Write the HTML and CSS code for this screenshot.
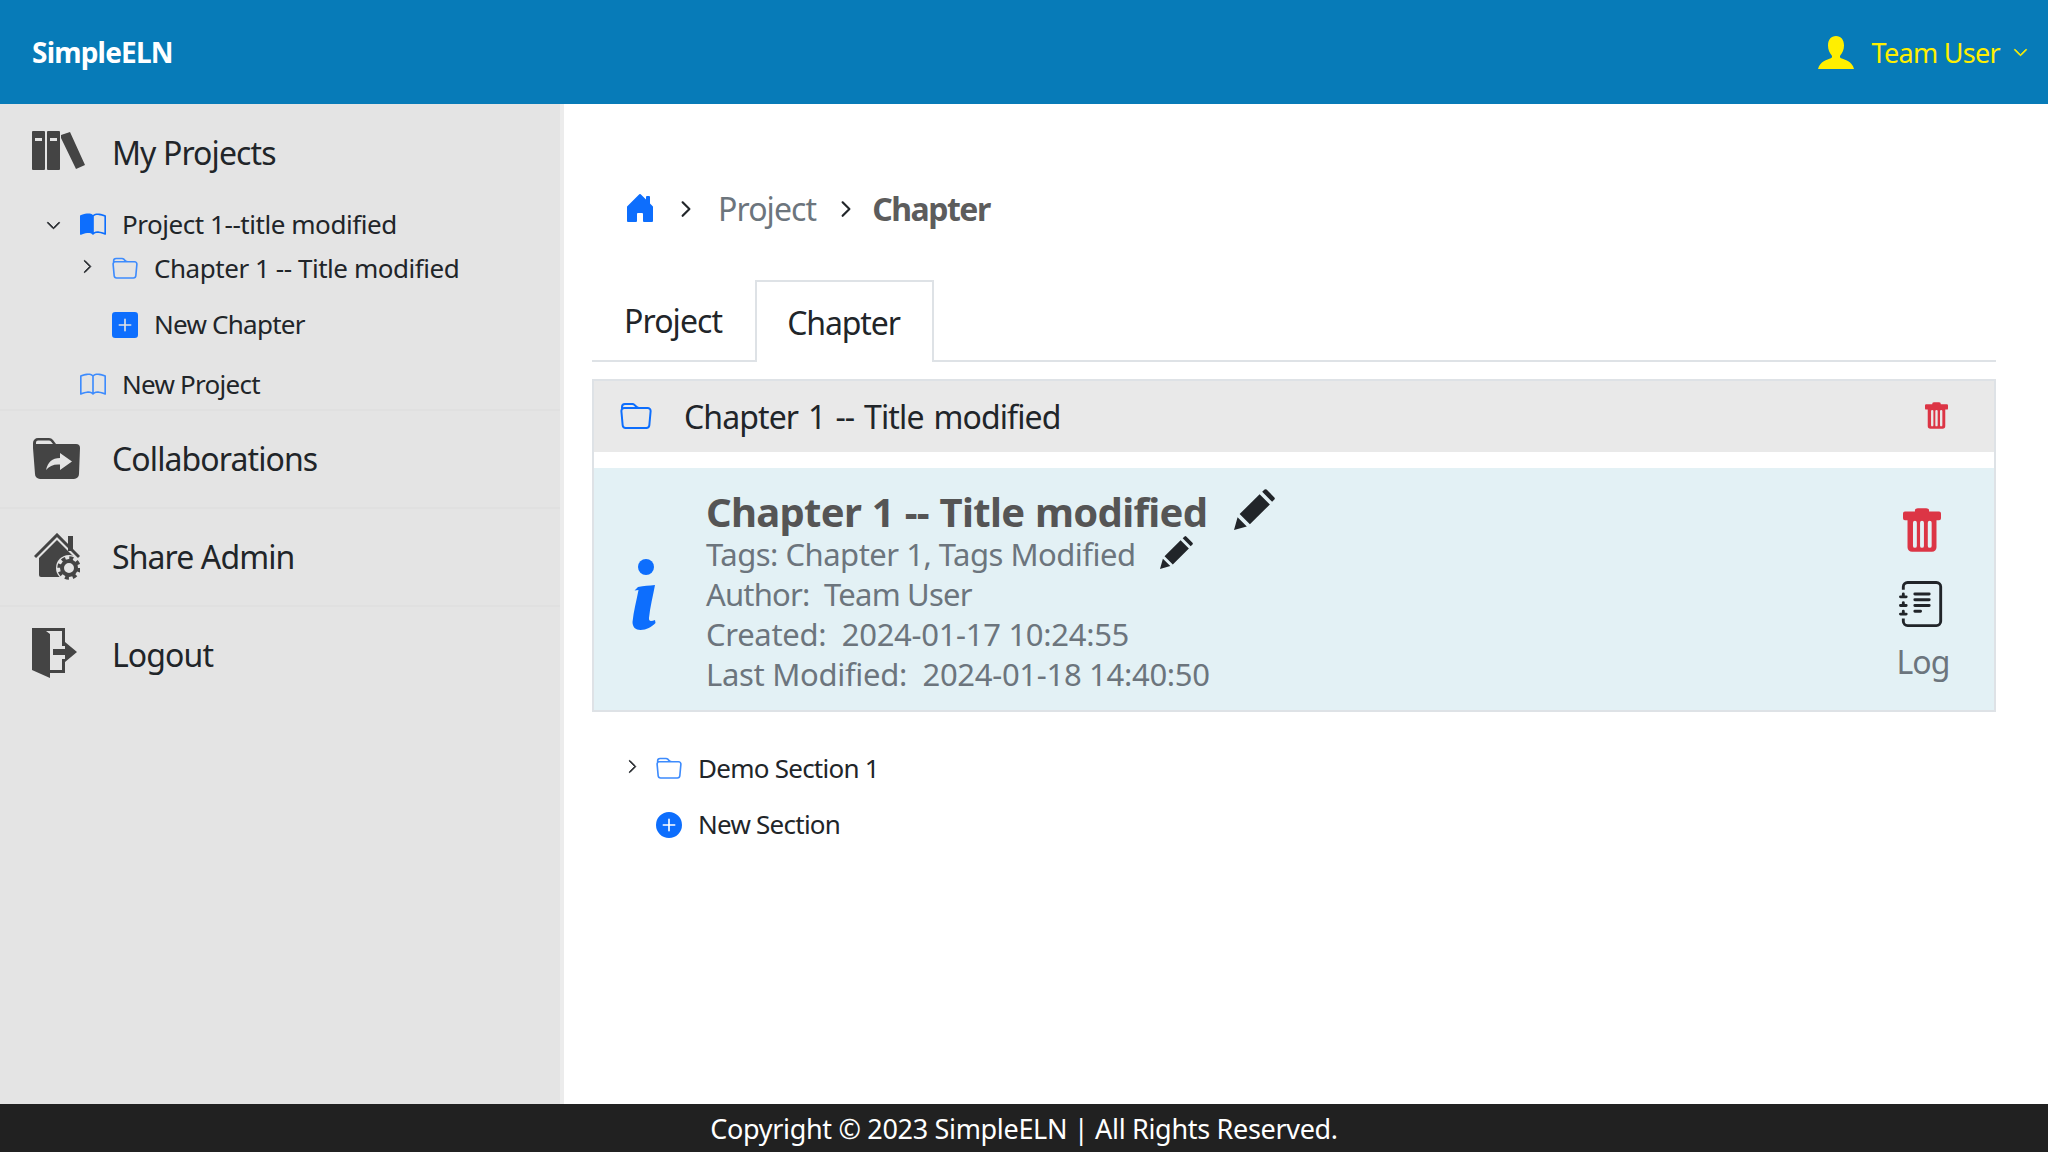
FILE: index.html
```html
<!DOCTYPE html>
<html lang="en">
<head>
<meta charset="utf-8">
<title>SimpleELN</title>
<link rel="stylesheet" href="styles.css">
</head>
<body>
<svg class="sprite" aria-hidden="true">
  <defs>
    <symbol id="chev-r" viewBox="0 0 16 16"><path fill="currentColor" stroke="currentColor" stroke-width=".9" d="M4.646 1.646a.5.5 0 0 1 .708 0l6 6a.5.5 0 0 1 0 .708l-6 6a.5.5 0 0 1-.708-.708L10.293 8 4.646 2.354a.5.5 0 0 1 0-.708z"/></symbol>
    <symbol id="chev-d" viewBox="0 0 16 16"><path fill="currentColor" stroke="currentColor" stroke-width=".9" d="M1.646 4.646a.5.5 0 0 1 .708 0L8 10.293l5.646-5.647a.5.5 0 0 1 .708.708l-6 6a.5.5 0 0 1-.708 0l-6-6a.5.5 0 0 1 0-.708z"/></symbol>
    <symbol id="book" viewBox="0 0 16 16"><path fill="currentColor" d="M1 2.828c.885-.37 2.154-.769 3.388-.893 1.33-.134 2.458.063 3.112.752v9.746c-.935-.53-2.12-.603-3.213-.493-1.18.12-2.37.461-3.287.811V2.828zm7.5-.141c.654-.689 1.782-.886 3.112-.752 1.234.124 2.503.523 3.388.893v9.923c-.918-.35-2.107-.692-3.287-.81-1.094-.111-2.278-.039-3.213.492V2.687zM8 1.783C7.015.936 5.587.81 4.287.94c-1.514.153-3.042.672-3.994 1.105A.5.5 0 0 0 0 2.5v11a.5.5 0 0 0 .707.455c.882-.4 2.303-.881 3.68-1.02 1.409-.142 2.59.087 3.223.877a.5.5 0 0 0 .78 0c.633-.79 1.814-1.019 3.222-.877 1.378.139 2.8.62 3.681 1.02A.5.5 0 0 0 16 13.5v-11a.5.5 0 0 0-.293-.455c-.952-.433-2.48-.952-3.994-1.105C10.413.809 8.985.936 8 1.783z"/></symbol>
    <symbol id="book-half" viewBox="0 0 16 16"><path fill="currentColor" d="M8.5 2.687c.654-.689 1.782-.886 3.112-.752 1.234.124 2.503.523 3.388.893v9.923c-.918-.35-2.107-.692-3.287-.81-1.094-.111-2.278-.039-3.213.492V2.687zM8 1.783C7.015.936 5.587.81 4.287.94c-1.514.153-3.042.672-3.994 1.105A.5.5 0 0 0 0 2.5v11a.5.5 0 0 0 .707.455c.882-.4 2.303-.881 3.68-1.02 1.409-.142 2.59.087 3.223.877a.5.5 0 0 0 .78 0c.633-.79 1.814-1.019 3.222-.877 1.378.139 2.8.62 3.681 1.02A.5.5 0 0 0 16 13.5v-11a.5.5 0 0 0-.293-.455c-.952-.433-2.48-.952-3.994-1.105C10.413.809 8.985.936 8 1.783z"/></symbol>
    <symbol id="folder" viewBox="0 0 16 16"><path fill="currentColor" d="M.54 3.87.5 3a2 2 0 0 1 2-2h3.672a2 2 0 0 1 1.414.586l.828.828A2 2 0 0 0 9.828 3h3.982a2 2 0 0 1 1.992 2.181l-.637 7A2 2 0 0 1 13.174 14H2.826a2 2 0 0 1-1.991-1.819l-.637-7a1.99 1.99 0 0 1 .342-1.31zM2.19 4a1 1 0 0 0-.996 1.09l.637 7a1 1 0 0 0 .995.91h10.348a1 1 0 0 0 .995-.91l.637-7A1 1 0 0 0 13.81 4H2.19zm4.69-1.707A1 1 0 0 0 6.172 2H2.5a1 1 0 0 0-1 .981l.006.139C1.72 3.042 1.95 3 2.19 3h5.396l-.707-.707z"/></symbol>
    <symbol id="home" viewBox="0 0 16 16"><path fill="currentColor" d="M6.5 14.5v-3.505c0-.245.25-.495.5-.495h2c.25 0 .5.25.5.5v3.5a.5.5 0 0 0 .5.5h4a.5.5 0 0 0 .5-.5v-7a.5.5 0 0 0-.146-.354L13 5.793V2.5a.5.5 0 0 0-.5-.5h-1a.5.5 0 0 0-.5.5v1.293L8.354 1.146a.5.5 0 0 0-.708 0l-6 6A.5.5 0 0 0 1.5 7.5v7a.5.5 0 0 0 .5.5h4a.5.5 0 0 0 .5-.5z"/></symbol>
    <symbol id="trash" viewBox="0 0 118 135"><path fill="currentColor" fill-rule="evenodd" d="M46 0h26a9 9 0 0 1 9 10h31a6 6 0 0 1 6 6v15a6 6 0 0 1-6 6h-8v84a14 14 0 0 1-14 14H28a14 14 0 0 1-14-14V37H6a6 6 0 0 1-6-6V16a6 6 0 0 1 6-6h31a9 9 0 0 1 9-10zM31 45v72a6 6 0 0 0 12 0V45a6 6 0 0 0-12 0zm22 0v72a6 6 0 0 0 12 0V45a6 6 0 0 0-12 0zm24 0v72a6 6 0 0 0 12 0V45a6 6 0 0 0-12 0z"/></symbol>
    <symbol id="pencil" viewBox="0 0 40 40"><path fill="currentColor" d="M0 40l3.5-12.5 9 9zM5.500 24.500 25 5l10 10-19.500 19.500zM27.500 2.800 29.800.6q1-.9 2 0l7.600 7.600q.9 1 0 2l-2.200 2.300z"/></symbol>
    <symbol id="journal" viewBox="0 0 16 16"><path fill="currentColor" d="M5 10.500a.5.5 0 0 1 .5-.5h2a.5.5 0 0 1 0 1h-2a.5.5 0 0 1-.5-.5zm0-2a.5.5 0 0 1 .5-.5h5a.5.5 0 0 1 0 1h-5a.5.5 0 0 1-.5-.5zm0-2a.5.5 0 0 1 .5-.5h5a.5.5 0 0 1 0 1h-5a.5.5 0 0 1-.5-.5zm0-2a.5.5 0 0 1 .5-.5h5a.5.5 0 0 1 0 1h-5a.5.5 0 0 1-.5-.5z"/><path fill="currentColor" d="M3 0h10a2 2 0 0 1 2 2v12a2 2 0 0 1-2 2H3a2 2 0 0 1-2-2v-1h1v1a1 1 0 0 0 1 1h10a1 1 0 0 0 1-1V2a1 1 0 0 0-1-1H3a1 1 0 0 0-1 1v1H1V2a2 2 0 0 1 2-2z"/><path fill="currentColor" d="M1 5v-.5a.5.5 0 0 1 1 0V5h.5a.5.5 0 0 1 0 1h-2a.5.5 0 0 1 0-1H1zm0 3v-.5a.5.5 0 0 1 1 0V8h.5a.5.5 0 0 1 0 1h-2a.5.5 0 0 1 0-1H1zm0 3v-.5a.5.5 0 0 1 1 0v.5h.5a.5.5 0 0 1 0 1h-2a.5.5 0 0 1 0-1H1z"/></symbol>
  </defs>
</svg>

<header class="topbar">
  <div class="brand">SimpleELN</div>
  <div class="user">
    <svg class="user-icon" viewBox="0 0 36 33"><path fill="currentColor" d="M18 0c5 0 8 3.800 8 9.500 0 4-1.500 7.500-3.600 9.800-.7.800-.6 2.400.6 3 4 1.400 11 3 13 10.700H0c2-7.700 9-9.300 13-10.700 1.200-.6 1.300-2.200.6-3C11.500 17 10 13.500 10 9.500 10 3.800 13 0 18 0z"/></svg>
    <span class="user-name">Team User</span>
    <svg class="user-chev"><use href="#chev-d"/></svg>
  </div>
</header>

<div class="shell">
  <aside class="sidebar">
    <section class="nav-group">
      <div class="nav-row">
        <span class="nav-icon">
          <svg class="ico-books" viewBox="0 0 53 39"><path fill="#444" fill-rule="evenodd" d="M1 0h11a1 1 0 0 1 1 1v37a1 1 0 0 1-1 1H1a1 1 0 0 1-1-1V1a1 1 0 0 1 1-1zm2 7v3h7V7zM16 0h11a1 1 0 0 1 1 1v37a1 1 0 0 1-1 1H16a1 1 0 0 1-1-1V1a1 1 0 0 1 1-1zm2 7v3h7V7zM29 4l9-3 15 33-9 4-15-31z"/></svg>
        </span>
        <span class="nav-label">My Projects</span>
      </div>
      <div class="tree">
        <div class="tree-row lvl1">
          <span class="chev-slot"><svg class="chev-d"><use href="#chev-d"/></svg></span>
          <svg class="tree-ico blue-dark"><use href="#book-half"/></svg>
          <span class="tree-text tight">Project 1--title modified</span>
        </div>
        <div class="tree-row lvl2">
          <span class="chev-slot"><svg class="chev-r"><use href="#chev-r"/></svg></span>
          <svg class="tree-ico blue-light"><use href="#folder"/></svg>
          <span class="tree-text tight">Chapter 1 -- Title modified</span>
        </div>
        <div class="tree-row lvl2 gap-a">
          <span class="chev-slot"></span>
          <svg class="tree-ico" viewBox="0 0 16 16"><path fill="#0d6efd" d="M2 0a2 2 0 0 0-2 2v12a2 2 0 0 0 2 2h12a2 2 0 0 0 2-2V2a2 2 0 0 0-2-2H2zm6.500 4.500v3h3a.5.5 0 0 1 0 1h-3v3a.5.5 0 0 1-1 0v-3h-3a.5.5 0 0 1 0-1h3v-3a.5.5 0 0 1 1 0z"/></svg>
          <span class="tree-text">New Chapter</span>
        </div>
        <div class="tree-row lvl1 gap-b">
          <span class="chev-slot"></span>
          <svg class="tree-ico blue-light"><use href="#book"/></svg>
          <span class="tree-text">New Project</span>
        </div>
      </div>
    </section>
    <section class="nav-group nav-line">
      <div class="nav-row">
        <span class="nav-icon">
          <svg class="ico-collab" viewBox="0 0 47 41"><path fill="#444" fill-rule="evenodd" d="M5 0h11a5 5 0 0 1 4 2l3 4h20a4 4 0 0 1 4 4L46 36a5 5 0 0 1-5 5H7a5 5 0 0 1-5-5L0 10V5a5 5 0 0 1 5-5zm0 2.500a2 2 0 0 0-2 2V6h17l-2-2.500a3 3 0 0 0-2-1zM27 15v5c-8 0-12 4-14 12 3-4 8-6 14-5.500V32l12-8.500z"/></svg>
        </span>
        <span class="nav-label">Collaborations</span>
      </div>
    </section>
    <section class="nav-group nav-line">
      <div class="nav-row">
        <span class="nav-icon">
          <svg class="ico-share" viewBox="0 0 46 48">
            <path fill="#444" d="M34 3h5v15h-5z"/>
            <path fill="none" stroke="#444" stroke-width="3" d="M1 24 23 2l22 22"/>
            <path fill="#444" d="M23 7 39 23v21H7a2 2 0 0 1-2-2V25z"/>
            <circle cx="35" cy="35" r="13" fill="#e4e4e4"/>
            <circle cx="35" cy="35" r="7" fill="none" stroke="#444" stroke-width="4"/>
            <circle cx="35" cy="35" r="10" fill="none" stroke="#444" stroke-width="3.500" stroke-dasharray="4 3.850"/>
          </svg>
        </span>
        <span class="nav-label">Share Admin</span>
      </div>
    </section>
    <section class="nav-group nav-line">
      <div class="nav-row">
        <span class="nav-icon">
          <svg class="ico-logout" viewBox="0 0 45 50"><path fill="#444" d="M0 0h33v18h-3V3H14L18 6v36h12V31h3v14H18v5L0 42z"/><path fill="#444" d="M21 21h12v-7l12 10-12 10v-7H21z"/></svg>
        </span>
        <span class="nav-label">Logout</span>
      </div>
    </section>
  </aside>

  <main class="content">
    <nav class="crumbs">
      <svg class="crumb-home"><use href="#home"/></svg>
      <svg class="crumb-sep"><use href="#chev-r"/></svg>
      <span class="crumb-link">Project</span>
      <svg class="crumb-sep"><use href="#chev-r"/></svg>
      <strong class="crumb-now">Chapter</strong>
    </nav>

    <div class="tabs">
      <div class="tab">Project</div>
      <div class="tab tab-active">Chapter</div>
    </div>

    <div class="card">
      <div class="card-head">
        <svg class="head-folder"><use href="#folder"/></svg>
        <span class="head-title">Chapter 1 -- Title modified</span>
        <svg class="head-trash"><use href="#trash"/></svg>
      </div>
      <div class="panel">
        <svg class="info-i" viewBox="0 0 24 72"><circle cx="14" cy="8" r="8" fill="#0d6efd"/><path fill="#0d6efd" d="M6 28c6-1 11-1.500 17-2-2 11-5 22-6 33-.2 2 .5 3 2 3 1.200 0 2.500-.5 4-1l.5 3c-4 4-9 7-15 7-5 0-8-3-8-8 1-11 4-21 6-32l-4 .5z"/></svg>
        <div class="meta">
          <div class="meta-title">Chapter 1 -- Title modified<svg class="pencil-lg"><use href="#pencil"/></svg></div>
          <div class="meta-line m-tags">Tags: Chapter 1, Tags Modified<svg class="pencil-sm"><use href="#pencil"/></svg></div>
          <div class="meta-line">Author:&nbsp; Team User</div>
          <div class="meta-line m-date">Created:&nbsp; 2024-01-17 10:24:55</div>
          <div class="meta-line m-date">Last Modified:&nbsp; 2024-01-18 14:40:50</div>
        </div>
        <div class="actions">
          <svg class="act-trash"><use href="#trash"/></svg>
          <svg class="act-log"><use href="#journal"/></svg>
          <span class="act-label">Log</span>
        </div>
      </div>
    </div>

    <div class="sections">
      <div class="sec-row">
        <span class="sec-chev"><svg class="chev-r"><use href="#chev-r"/></svg></span>
        <svg class="tree-ico blue-light"><use href="#folder"/></svg>
        <span class="tree-text">Demo Section 1</span>
      </div>
      <div class="sec-row">
        <span class="sec-chev"></span>
        <svg class="tree-ico" viewBox="0 0 16 16"><path fill="#0d6efd" d="M16 8A8 8 0 1 1 0 8a8 8 0 0 1 16 0zM8.500 4.500a.5.5 0 0 0-1 0v3h-3a.5.5 0 0 0 0 1h3v3a.5.5 0 0 0 1 0v-3h3a.5.5 0 0 0 0-1h-3v-3z"/></svg>
        <span class="tree-text">New Section</span>
      </div>
    </div>
  </main>
</div>

<footer class="footer">Copyright © 2023 SimpleELN | All Rights Reserved.</footer>
</body>
</html>
```

FILE: styles.css
```css
* { box-sizing: border-box; }
html, body { height: 100%; }
body {
  margin: 0;
  display: flex;
  flex-direction: column;
  height: 1152px;
  overflow: hidden;
  font-family: "Noto Sans", "Open Sans", sans-serif;
  color: #212529;
  background: #fff;
}
svg { display: block; flex: none; }
.sprite { position: absolute; width: 0; height: 0; }

/* header */
.topbar {
  flex: none;
  height: 104px;
  background: #077bb8;
  display: flex;
  align-items: center;
  justify-content: space-between;
  padding: 0 20px 0 32px;
}
.brand { color: #fff; font-size: 28px; font-weight: 700; letter-spacing: -.8px; }
.user { display: flex; align-items: center; color: #ffef00; }
.user-icon { width: 36px; height: 33px; margin-right: 17px; }
.user-name { font-size: 27px; letter-spacing: -.7px; }
.user-chev { width: 15px; height: 15px; margin-left: 13px; }

/* layout */
.shell { flex: 1; display: flex; min-height: 0; }
.sidebar {
  flex: none;
  width: 564px;
  background: #e4e4e4;
  border-right: 4px solid #ececec;
  font-size: 26px;
}
.nav-line { border-top: 2px solid #e0e0e0; }
.nav-row { height: 96px; display: flex; align-items: center; padding-left: 32px; }
.nav-group:first-child .nav-row { height: 98px; }
.nav-icon { width: 80px; display: flex; align-items: center; }
.nav-label { font-size: 32px; letter-spacing: -.9px; padding-bottom: 2px; }
.ico-books { width: 53px; height: 39px; margin-top: -6px; }
.ico-collab { width: 47px; height: 41px; margin-left: 1px; margin-top: -2px; }
.ico-share { width: 46px; height: 48px; margin-left: 2px; }
.ico-logout { width: 45px; height: 50px; margin-top: -4px; }

/* tree */
.tree { padding-bottom: 2px; margin-top: 1px; font-size: 26px; letter-spacing: -.75px; }
.tree-row { height: 44px; display: flex; align-items: center; }
.tree-text { padding-bottom: 2px; }
.tight { letter-spacing: -.45px; }
.lvl1 { padding-left: 46px; }
.lvl2 { padding-left: 78px; }
.gap-a { margin-top: 12px; }
.gap-b { margin-top: 16px; }
.chev-slot { width: 34px; flex: none; }
.chev-d { width: 15px; height: 15px; }
.chev-r { width: 15px; height: 15px; margin-left: 2px; margin-top: -5px; }
.tree-ico { width: 26px; height: 26px; margin-right: 16px; }
.blue-dark { color: #0d6efd; }
.blue-light { color: #3d8bfd; }

/* content */
.content { flex: 1; min-width: 0; padding: 0 52px 0 28px; }
.crumbs {
  display: flex;
  align-items: center;
  height: 50px;
  margin-top: 80px;
  padding-left: 32px;
  font-size: 32px;
  letter-spacing: -.9px;
}
.crumb-home { width: 32px; height: 34px; color: #0d6efd; margin-top: -2px; }
.crumb-sep { width: 18px; height: 18px; margin: 0 23px 0 21px; color: #212529; }
.crumb-link { color: #6c757d; padding-bottom: 2px; }
.crumb-now { color: #5c5c5c; margin-left: -6px; letter-spacing: -1.5px; padding-bottom: 2px; }

.tabs {
  display: flex;
  align-items: flex-end;
  height: 82px;
  margin-top: 46px;
  border-bottom: 2px solid #dee2e6;
  font-size: 32px;
  letter-spacing: -.9px;
}
.tab { width: 163px; height: 80px; padding: 19px 0 0 32px; }
.tab-active {
  width: 179px;
  height: 82px;
  margin-bottom: -2px;
  background: #fff;
  border: 2px solid #dee2e6;
  border-bottom: 0;
  padding: 19px 2px 0 0;
  text-align: center;
  letter-spacing: -1.1px;
}

.card { margin-top: 17px; border: 2px solid #dee2e6; }
.card-head {
  height: 71px;
  background: #e9e9e9;
  display: flex;
  align-items: center;
  padding: 0 46px 0 26px;
  font-size: 32px;
  letter-spacing: -.9px;
  word-spacing: 2.5px;
}
.head-folder { width: 32px; height: 32px; margin-right: 32px; color: #0d6efd; }
.head-title { flex: 1; }
.head-trash { width: 23px; height: 27px; margin-top: -3px; color: #dc3545; }
.panel {
  height: 242px;
  margin-top: 16px;
  background: #e3f1f5;
  display: flex;
}
.info-i { width: 24px; height: 72px; margin: 91px 50px 0 38px; }
.meta { flex: 1; padding-top: 20px; color: #6c757d; }
.meta-title {
  height: 46px;
  display: flex;
  align-items: center;
  font-size: 40px;
  font-weight: 700;
  letter-spacing: -.7px;
  word-spacing: 1px;
  color: #555;
}
.pencil-lg { width: 41px; height: 41px; margin: -3px 0 0 27px; color: #212529; }
.meta-line {
  height: 40px;
  display: flex;
  align-items: center;
  font-size: 31px;
  letter-spacing: -.8px;
  white-space: pre;
}
.m-tags { letter-spacing: -.5px; }
.m-date { letter-spacing: -.3px; }
.pencil-sm { width: 33px; height: 33px; margin: -4px 0 0 24px; color: #212529; }
.actions {
  width: 60px;
  margin-right: 42px;
  padding-top: 40px;
  display: flex;
  flex-direction: column;
  align-items: center;
  color: #6c757d;
}
.act-trash { width: 38px; height: 44px; color: #dc3545; }
.act-log { width: 46px; height: 46px; margin-top: 29px; color: #212529; }
.act-label { margin-top: 13px; margin-left: 2px; font-size: 32px; line-height: 44px; letter-spacing: -.9px; }

/* sections */
.sections { padding: 35px 0 0 32px; font-size: 26px; letter-spacing: -.75px; }
.sec-row { height: 44px; display: flex; align-items: center; }
.sec-row + .sec-row { margin-top: 12px; }
.sec-chev { width: 32px; flex: none; }
.sections .tree-ico { margin-right: 16px; }
.sections .chev-r { margin-left: 1px; }

.footer {
  flex: none;
  height: 48px;
  background: #212121;
  color: #fff;
  display: flex;
  align-items: center;
  justify-content: center;
  font-size: 27px;
  letter-spacing: -.32px;
  padding-top: 1px;
}
```
